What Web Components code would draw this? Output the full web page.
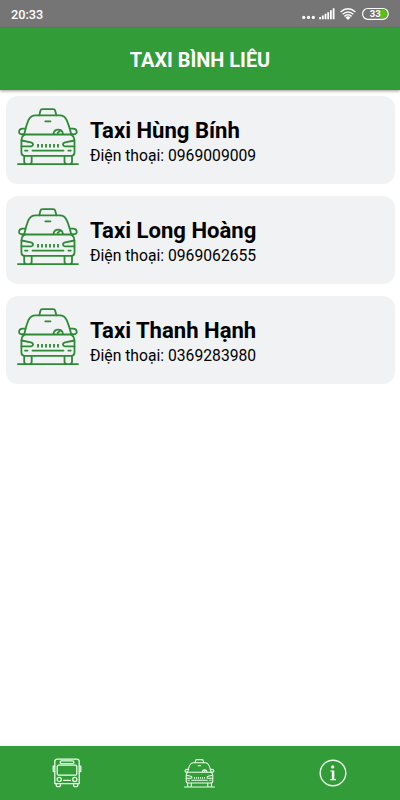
<!DOCTYPE html>
<html lang="vi"><head><meta charset="utf-8"><title>Taxi Bình Liêu</title>
<style>body{margin:0;background:#fff;font-family:Roboto,"Noto Sans",sans-serif}</style></head>
<body><taxi-app></taxi-app>
<script>
const define = (name, html) => customElements.define(name, class extends HTMLElement {
  constructor() {
    super();
    const t = document.createElement('template');
    t.innerHTML = html;
    this.attachShadow({mode: 'open'}).append(t.content.cloneNode(true));
  }
});

define('taxi-icon', `<style>:host{display:block;width:62px;height:58px;color:#2d8a35;--line:1.8}svg{display:block;width:100%;height:100%}</style>
<svg viewBox="0 0 62 58" fill="none" stroke="currentColor" style="stroke-width:var(--line)" stroke-linecap="round" stroke-linejoin="round">
<path d="M22.3 7.3 23.4 2.7Q23.8 1.2 25.4 1.2H36.2Q37.8 1.2 38.2 2.7L39.4 7.3"/>
<path d="M7.2 26.5C8.2 21.5 9.4 16.8 11.4 12.2 12.9 9 15.4 7.4 18.7 7.4H42.7C46 7.4 48.3 9 49.7 12.2 51.7 16.8 53 21.5 54.3 26.5"/>
<path d="M5 26.5H56.5M8 26.2H4.6C2.4 26.2 1.8 24.8 2.2 23 2.6 21.2 3.6 20.7 5.6 20.7H8.5M53.5 26.2H57C59.4 26.2 60 24.8 59.6 23 59.2 21.2 58.2 20.7 56.2 20.7H52.9"/>
<path d="M28.3 13.3H33.5M36.4 26.2C36.8 23.3 38.6 21.7 41.2 21.7S45.6 23.3 46 26.2M40.6 25 42.4 23.4"/>
<path d="M7.2 26.5Q4.6 28.5 4.4 33V44.8Q4.6 47.8 7.6 47.8H54.3Q57.3 47.8 57.5 44.8V33Q57.3 28.5 54.3 26.5"/>
<path d="M4.6 32.5 13.8 34.4Q16.2 35 16 36.7T14 38.4H4.5M57.3 32.5 48.2 34.4Q45.8 35 46 36.7T48 38.4H57.4"/>
<path stroke-linecap="butt" d="M21 36V39.4M25 36V39.4M29 36V39.4M33 36V39.4M37 36V39.4M41 36V39.4"/><path d="M8 42.6H10.5M15.5 42.6H46.5M51.3 42.6H53.8"/>
<path d="M7.2 48V53.5Q7.2 56.1 9.7 56.1H12.2Q14.7 56.1 14.7 53.5V48M47.5 48V53.5Q47.5 56.1 50 56.1H52.5Q55 56.1 55 53.5V48M.9 56.1H61"/></svg>`);

define('status-bar', `<style>:host{display:flex;box-sizing:border-box;height:28px;padding:0 11px;align-items:center;justify-content:space-between;background:#757575;color:#fff}
.time{font:500 12.7px/28px Roboto,sans-serif;padding-top:1px}svg{display:block}</style>
<span class="time">20:33</span>
<svg width="89" height="28" viewBox="300 0 89 28">
<g fill="#fff"><circle cx="303.7" cy="17.4" r="1.6"/><circle cx="308.5" cy="17.4" r="1.6"/><circle cx="313.3" cy="17.4" r="1.6"/>
<path d="M319.2 17h1.8v2.2h-1.8zM321.9 15.4h1.8v3.8h-1.8zM324.6 13.8h1.8v5.4h-1.8zM327.3 12.2h1.8v7h-1.8zM330 10.3h1.8v8.9H330zM332.7 8.3h1.8v10.9h-1.8z"/><path d="M345.5 17.4Q348 15.3 350.5 17.4L348 20z"/></g>
<g fill="none" stroke="#fff" stroke-width="1.5"><path d="M340.6 12Q348 5.6 355.4 12M342.6 14.3Q348 9.7 353.4 14.3M344.4 16.4Q348 13.2 351.6 16.4"/></g>
<path d="M380 9.7h2.6a4 4 0 0 1 0 8.5H380z" fill="#56c313"/>
<rect x="362.6" y="8.5" width="25.6" height="10.8" rx="5.2" fill="none" stroke="#fff" stroke-width="1.2"/>
<text x="375.3" y="17.3" text-anchor="middle" fill="#fff" font-family="Roboto,sans-serif" font-weight="700" font-size="9.5">33</text></svg>`);

define('app-header', `<style>:host{display:flex;height:62px;align-items:center;justify-content:center;background:#329d38;box-shadow:0 1px 3px #0006;color:#fff;position:relative}
h1{margin:3px 0 0;font-size:19.9px;line-height:26px;font-weight:700}</style><h1><slot></slot></h1>`);

define('taxi-card', `<style>:host{display:flex;box-sizing:border-box;height:88.5px;padding:0 11px;gap:11.5px;align-items:center;background:#f1f2f4;border-radius:12px;color:#000}
taxi-icon{margin-top:-5px}h2{margin:5px 0 0;font-size:22.1px;line-height:27px;font-weight:700}p{margin:1px 0 0;font-size:15.7px;line-height:22px}</style>
<taxi-icon></taxi-icon><div><h2><slot name="name"></slot></h2><p>Điện thoại: <slot name="phone"></slot></p></div>`);

define('bottom-nav', `<style>:host{display:grid;grid-template-columns:repeat(3,1fr);height:54px;place-items:center;background:#329d38;color:#fff}
svg{display:block}taxi-icon{width:31px;height:29px;color:#e8ffe8;--line:2.1}</style>
<svg width="30" height="32" viewBox="0 0 30 32" fill="none" stroke="#ecffec" stroke-width="1.25" stroke-linejoin="round" stroke-linecap="round">
<path d="M5.2 2.1H24.8Q27.2 2.1 27.2 4.5V26.5H2.8V4.5Q2.8 2.1 5.2 2.1Z"/><rect x="8.2" y="3.8" width="13.6" height="2.7" rx="1"/><rect x="5.2" y="8" width="19.6" height="10.2" rx="1.5"/>
<path d="M2.8 9H1.2V14.5H2.8M27.2 9H28.8V14.5H27.2M4.2 26.5V28.4Q4.2 29.5 5.3 29.5H7.3Q8.4 29.5 8.4 28.4V26.5M21.6 26.5V28.4Q21.6 29.5 22.7 29.5H24.7Q25.8 29.5 25.8 28.4V26.5M11.5 23.4H18.5"/><circle cx="7.2" cy="22.4" r="2.1"/><circle cx="22.8" cy="22.4" r="2.1"/></svg>
<taxi-icon></taxi-icon>
<svg width="28" height="28" viewBox="0 0 28 28"><circle cx="14" cy="14" r="12.8" fill="none" stroke="#ecffec" stroke-width="1.4"/><circle cx="13.7" cy="7.9" r="1.6" fill="#fff"/><path d="M11.3 11.5H15.3V20.1H17V21.2H11.2V20.1H12.8V12.6H11.3Z" fill="#fff"/></svg>`);

define('taxi-app', `<style>:host{display:flex;flex-direction:column;height:800px;background:#fff}main{flex:1;display:flex;flex-direction:column;gap:11.5px;padding:5.5px 5.5px}</style>
<status-bar></status-bar><app-header>TAXI BÌNH LIÊU</app-header>
<main>
<taxi-card><span slot="name">Taxi Hùng Bính</span><span slot="phone">0969009009</span></taxi-card>
<taxi-card><span slot="name">Taxi Long Hoàng</span><span slot="phone">0969062655</span></taxi-card>
<taxi-card><span slot="name">Taxi Thanh Hạnh</span><span slot="phone">0369283980</span></taxi-card>
</main><bottom-nav></bottom-nav>`);
</script></body></html>
